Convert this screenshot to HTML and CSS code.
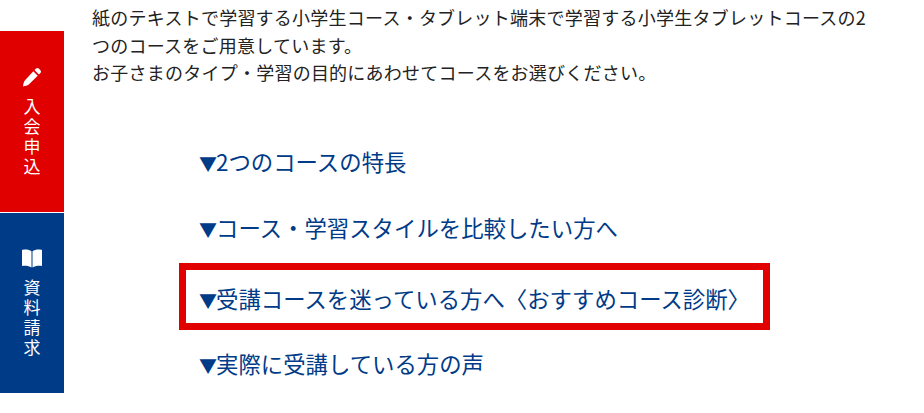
FILE: index.html
```html
<!DOCTYPE html>
<html lang="ja">
<head>
    <meta charset="UTF-8">
    <title>小学生コース</title>
    <link rel="stylesheet" href="styles.css">
</head>
<body>
    <div class="page">
        <!-- Side buttons -->
        <aside class="side">
            <a class="side-btn red" href="#">
                <svg class="side-icon" viewBox="0 0 20 20"><path d="M14 1.600c.8-.8 2-.8 2.800 0l1.600 1.600c.8.8.8 2 0 2.800l-1.500 1.500-4.400-4.400zM11.300 4.300l4.400 4.400-8.900 8.900c-1.500 1-3.500 1.500-5.800 1.800.3-2.300.8-4.300 1.800-5.800z" fill="#fff"/></svg>
                <span class="side-label">入<br>会<br>申<br>込</span>
            </a>
            <a class="side-btn blue" href="#">
                <svg class="side-icon" viewBox="0 0 20 20"><path d="M0 2c3.500-.8 7.200-.4 9.500 1.300V19.500c-2.300-1.500-6-2-9.500-1.500zM20 2c-3.500-.8-7.200-.4-9.500 1.300V19.500c2.300-1.500 6-2 9.500-1.500z" fill="#fff"/></svg>
                <span class="side-label">資<br>料<br>請<br>求</span>
            </a>
        </aside>
        <main class="main">
            <p class="intro">紙のテキストで学習する小学生コース・タブレット端末で学習する小学生タブレットコースの2つのコースをご用意しています。<br>お子さまのタイプ・学習の目的にあわせてコースをお選びください。</p>
            <ul class="links">
                <li><a href="#"><span class="arrow">▼</span>2つのコースの特長</a></li>
                <li><a href="#"><span class="arrow">▼</span>コース・学習スタイルを比較したい方へ</a></li>
                <li class="highlight"><a href="#"><span class="arrow">▼</span>受講コースを迷っている方へ〈おすすめコース診断〉</a></li>
                <li><a href="#"><span class="arrow">▼</span>実際に受講している方の声</a></li>
            </ul>
        </main>
    </div>
</body>
</html>
```

FILE: styles.css
```css
html, body {
    margin: 0;
    padding: 0;
    height: 413px;
    overflow: hidden;
    background: #fff;
}
body {
    font-family: "Noto Sans CJK JP", "Noto Sans", sans-serif;
}
a {
    text-decoration: none;
}
.page {
    display: flex;
}
.side {
    width: 64px;
    flex: none;
    margin-top: 31px;
    display: flex;
    flex-direction: column;
    gap: 1px;
}
.side-btn {
    height: 181px;
    box-sizing: border-box;
    padding-top: 36px;
    display: flex;
    flex-direction: column;
    align-items: center;
    color: #fff;
}
.side-btn.red {
    background: #e00000;
}
.side-btn.blue {
    height: 180px;
    padding-top: 35px;
    background: #003b88;
}
.side-icon {
    width: 20px;
    height: 20px;
    margin-bottom: 11px;
}
.side-label {
    font-family: "Liberation Sans", "Noto Sans CJK JP", sans-serif;
    font-size: 17px;
    line-height: 20px;
    text-align: center;
}
.main {
    margin-left: 28px;
    width: 780px;
}
.intro {
    margin: 4px 0 0;
    font-size: 18px;
    letter-spacing: .24px;
    line-height: 27.500px;
    color: #222;
}
.links {
    list-style: none;
    margin: 41.500px 0 0 87px;
    padding: 0;
    font-size: 22.400px;
}
.links li {
    height: 66px;
    line-height: 66px;
    padding-left: 21px;
    white-space: nowrap;
}
.links a {
    color: #003b88;
}
.arrow {
    display: inline-block;
    width: 16px;
    font-size: 18px;
    text-indent: -1px;
}
.links .highlight {
    width: 591px;
    height: 67px;
    margin-top: 3px;
    line-height: 57px;
    box-sizing: border-box;
    padding-left: 14px;
    border: 7px solid #e00000;
}
```
